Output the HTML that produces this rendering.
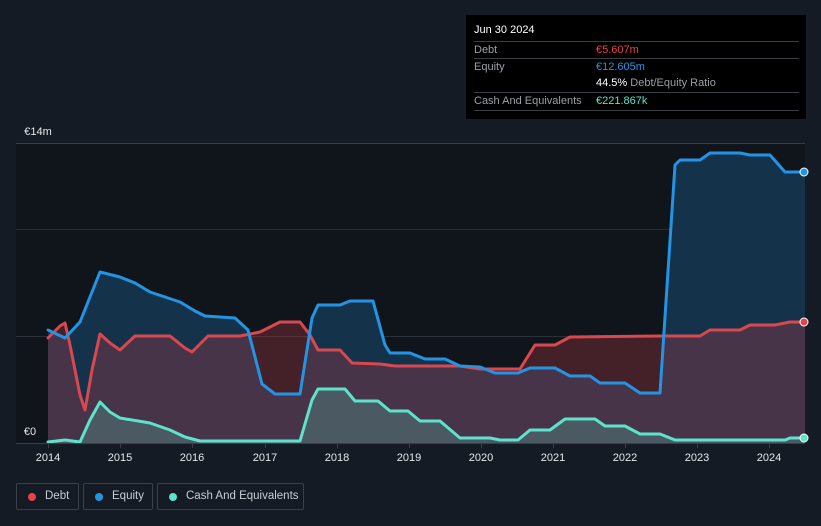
<!DOCTYPE html>
<html><head><meta charset="utf-8"><style>
body{margin:0;background:#151b25;width:821px;height:526px;overflow:hidden;font-family:"Liberation Sans",sans-serif;}
.tt{position:absolute;left:466px;top:15px;width:340px;height:104px;background:#000;}
.tt .h{position:absolute;left:8px;top:9px;color:#fff;font-size:11px;}
.row{position:absolute;left:8px;width:325px;border-top:1px solid #3a3d42;height:16px;font-size:11px;color:#9a9ea5;}
.row span{position:absolute;top:2px;white-space:nowrap;}
.leg{position:absolute;top:483px;height:27px;border:1px solid #3a4049;border-radius:2px;color:#c8ccd2;font-size:11.5px;box-sizing:border-box;white-space:nowrap;}
.leg i{position:absolute;left:11px;top:9px;width:8px;height:8px;border-radius:50%;}
.leg span{position:absolute;left:28px;top:6px;}
</style></head><body>
<svg width="821" height="526" style="position:absolute;left:0;top:0">
<rect x="16" y="143" width="789" height="300" fill="#10141b"/>
<line x1="16" y1="143.5" x2="805" y2="143.5" stroke="#3a3f47"/>
<line x1="16" y1="229.5" x2="805" y2="229.5" stroke="#262b33"/>
<line x1="16" y1="336.5" x2="805" y2="336.5" stroke="#2c3139"/>
<polygon fill="#14334b" points="48,330 65,338 80,322 100,272 120,277 135,283 150,292 165,297 180,302 195,311 205,316 235,318 248,330 262,384 275,394 300,394 312,318 318,305 340,305 350,301 373,301 385,345 390,353 410,353 425,359 445,359 460,366 480,367 495,373 518,373 530,368 555,368 570,376 590,376 600,383 625,383 640,393 660,393 675,165 680,160 700,160 710,153 740,153 750,155 770,155 785,172 805,172 805,443 48,443"/>
<polygon fill="rgba(167,54,70,0.35)" points="48,338 60,326 65,323 70,345 80,395 85,410 92,370 100,334 110,343 120,350 135,336 170,336 185,348 192,352 208,336 240,336 260,332 280,322 300,322 310,335 318,350 340,350 352,363 380,364 395,366 460,366 480,369 520,369 535,345 555,345 570,337 660,336 700,336 710,330 740,330 750,325 775,325 790,322 805,322 805,443 48,443"/>
<polygon fill="rgba(80,160,150,0.35)" points="48,442 65,440 80,442 90,420 100,402 110,412 120,418 150,423 170,430 185,437 200,441 300,441 312,400 318,389 345,389 355,401 378,401 390,411 408,411 420,421 440,421 460,438 490,438 500,440 518,440 530,430 550,430 565,419 595,419 605,426 625,426 640,434 660,434 675,440 785,440 790,438 805,438 805,443 48,443"/>
<g fill="none" stroke-width="3" stroke-linejoin="round" stroke-linecap="round">
<polyline stroke="#d9474f" points="48,338 60,326 65,323 70,345 80,395 85,410 92,370 100,334 110,343 120,350 135,336 170,336 185,348 192,352 208,336 240,336 260,332 280,322 300,322 310,335 318,350 340,350 352,363 380,364 395,366 460,366 480,369 520,369 535,345 555,345 570,337 660,336 700,336 710,330 740,330 750,325 775,325 790,322 805,322"/>
<polyline stroke="#2394e3" points="48,330 65,338 80,322 100,272 120,277 135,283 150,292 165,297 180,302 195,311 205,316 235,318 248,330 262,384 275,394 300,394 312,318 318,305 340,305 350,301 373,301 385,345 390,353 410,353 425,359 445,359 460,366 480,367 495,373 518,373 530,368 555,368 570,376 590,376 600,383 625,383 640,393 660,393 675,165 680,160 700,160 710,153 740,153 750,155 770,155 785,172 805,172"/>
<polyline stroke="#5ee3cb" points="48,442 65,440 80,442 90,420 100,402 110,412 120,418 150,423 170,430 185,437 200,441 300,441 312,400 318,389 345,389 355,401 378,401 390,411 408,411 420,421 440,421 460,438 490,438 500,440 518,440 530,430 550,430 565,419 595,419 605,426 625,426 640,434 660,434 675,440 785,440 790,438 805,438"/>
</g>
<circle cx="804" cy="172" r="4" fill="#2394e3" stroke="#fff" stroke-width="1"/>
<circle cx="804" cy="322" r="4" fill="#e0454d" stroke="#fff" stroke-width="1"/>
<circle cx="804" cy="438" r="4" fill="#5ee3cb" stroke="#fff" stroke-width="1"/>
<line x1="16" y1="443.5" x2="805" y2="443.5" stroke="#3a3f47"/>
<g stroke="#3a3f47"><line x1="48.5" y1="443" x2="48.5" y2="448"/><line x1="120.5" y1="443" x2="120.5" y2="448"/><line x1="192.5" y1="443" x2="192.5" y2="448"/><line x1="265.5" y1="443" x2="265.5" y2="448"/><line x1="337.5" y1="443" x2="337.5" y2="448"/><line x1="409.5" y1="443" x2="409.5" y2="448"/><line x1="481.5" y1="443" x2="481.5" y2="448"/><line x1="553.5" y1="443" x2="553.5" y2="448"/><line x1="625.5" y1="443" x2="625.5" y2="448"/><line x1="697.5" y1="443" x2="697.5" y2="448"/><line x1="769.5" y1="443" x2="769.5" y2="448"/></g>
<g fill="#e6e8eb" font-size="11" text-anchor="middle" font-family="Liberation Sans,sans-serif">
<text x="48" y="461">2014</text><text x="120" y="461">2015</text><text x="192" y="461">2016</text><text x="265" y="461">2017</text><text x="337" y="461">2018</text><text x="409" y="461">2019</text><text x="481" y="461">2020</text><text x="553" y="461">2021</text><text x="625" y="461">2022</text><text x="697" y="461">2023</text><text x="769" y="461">2024</text>
<text x="38" y="135">€14m</text><text x="30" y="435">€0</text>
</g>
</svg>
<div class="tt">
<div class="h">Jun 30 2024</div>
<div class="row" style="top:26px"><span>Debt</span><span style="left:122px;color:#e5424a">€5.607m</span></div>
<div class="row" style="top:43px"><span>Equity</span><span style="left:122px;color:#2394e3">€12.605m</span></div>
<div class="row" style="top:60px;border-top:none"><span style="left:122px;color:#9a9ea5"><b style="color:#fff;font-weight:normal">44.5%</b> Debt/Equity Ratio</span></div>
<div class="row" style="top:77px;height:17px;border-bottom:1px solid #3a3d42"><span>Cash And Equivalents</span><span style="left:122px;color:#5ee3cb">€221.867k</span></div>
</div>
<div class="leg" style="left:16px;width:63px"><i style="background:#e5424a"></i><span>Debt</span></div>
<div class="leg" style="left:83px;width:70px"><i style="background:#2394e3"></i><span>Equity</span></div>
<div class="leg" style="left:157px;width:147px"><i style="background:#5ee3cb"></i><span>Cash And Equivalents</span></div>
</body></html>
